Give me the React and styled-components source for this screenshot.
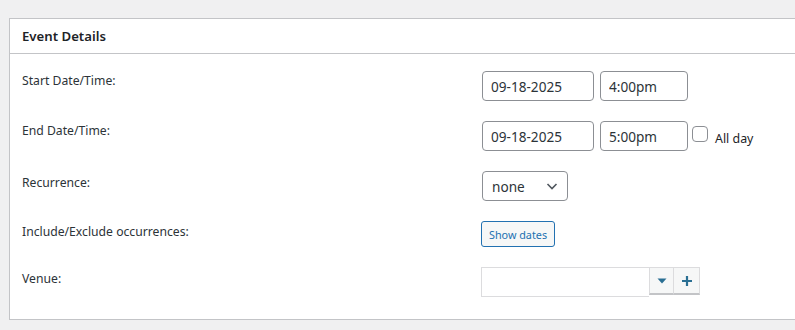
import styled, { createGlobalStyle } from "styled-components";

const GlobalStyle = createGlobalStyle`
  html, body {
    margin: 0;
    padding: 0;
    background: #f0f0f1;
    overflow: hidden;
  }
  body {
    font-family: "Segoe UI", "Noto Sans", "Open Sans", sans-serif;
    color: #1d2327;
    font-size: 13px;
  }
`;

const Page = styled.div`
  padding: 18px 0 0 9px;
`;

const Panel = styled.section`
  background: #fff;
  border: 1px solid #c3c4c7;
  border-right: none;
  height: 300px;
`;

const PanelHeader = styled.h2`
  margin: 0;
  height: 34px;
  padding: 0 12px;
  display: flex;
  align-items: center;
  font-size: 13.2px;
  font-weight: 600;
  color: #1d2327;
  border-bottom: 1px solid #c3c4c7;
`;

const Body = styled.div`
  display: grid;
  grid-template-columns: 460px 1fr;
  row-gap: 20px;
  padding: 17px 12px 22px;
  align-items: start;
`;

const Label = styled.div`
  font-size: 12.2px;
  line-height: 18px;
  padding-top: ${(p) => p.$offset || 1}px;
  color: #2c3338;
`;

const Field = styled.div`
  display: flex;
  align-items: center;
  gap: 6px;
  margin-left: ${(p) => (p.$flush ? -1 : 0)}px;
`;

const TextInput = styled.input`
  box-sizing: border-box;
  width: ${(p) => p.$width}px;
  height: 30px;
  padding: 0 8px;
  border: 1px solid #8c8f94;
  border-radius: 4px;
  font: inherit;
  font-size: 13.6px;
  color: #2c3338;
  background: #fff;
  outline: none;
`;

const SelectBox = styled.div`
  box-sizing: border-box;
  width: 86px;
  height: 30px;
  padding: 0 8px 0 9px;
  border: 1px solid #8c8f94;
  border-radius: 4px;
  display: flex;
  align-items: center;
  justify-content: space-between;
  font-size: 13.6px;
  color: #2c3338;
`;

const Check = styled.span`
  box-sizing: border-box;
  width: 16px;
  height: 16px;
  border: 1px solid #8c8f94;
  border-radius: 4px;
  margin: -5px 0 0 -2px;
`;

const CheckLabel = styled.span`
  font-size: 12.4px;
  color: #1d2327;
  margin: 4px 0 0 1px;
`;

const SmallButton = styled.button`
  box-sizing: border-box;
  height: 26px;
  padding: 0 7px;
  border: 1px solid #2271b1;
  border-radius: 3px;
  background: #f6f7f7;
  color: #2271b1;
  font: inherit;
  font-size: 10.8px;
  cursor: pointer;
`;

const Combo = styled.div`
  display: flex;
  align-items: flex-start;
`;

const ComboInput = styled.div`
  box-sizing: border-box;
  width: 168px;
  height: 30px;
  border: 1px solid #dcdcde;
  border-right: none;
  background: #fff;
`;

const ComboButton = styled.span`
  box-sizing: border-box;
  width: ${(p) => p.$width}px;
  height: 28px;
  display: flex;
  align-items: center;
  justify-content: center;
  background: #f6f7f7;
  border: 1px solid #dcdcde;
  border-bottom: 2px solid #c3c4c7;
  border-left: ${(p) => (p.$joined ? "none" : "1px solid #dcdcde")};
  color: #2a6f93;
`;

const Chevron = () => (
  <svg width="14" height="14" viewBox="0 0 14 14">
    <path d="M2.5 5 L7 9.5 L11.5 5" fill="none" stroke="#50575e" strokeWidth="1.6" />
  </svg>
);

const Caret = () => (
  <svg width="10" height="6" viewBox="0 0 10 6">
    <path d="M0.5 0.5 H9.5 L5 5.5 Z" fill="#2a6f93" />
  </svg>
);

const Plus = () => (
  <svg width="10" height="10" viewBox="0 0 10 10">
    <path d="M5 0 V10 M0 5 H10" stroke="#2a6f93" strokeWidth="2.2" />
  </svg>
);

export default function App() {
  return (
    <>
      <GlobalStyle />
      <Page>
        <Panel>
          <PanelHeader>Event Details</PanelHeader>
          <Body>
            <Label>Start Date/Time:</Label>
            <Field>
              <TextInput $width={112} defaultValue="09-18-2025" />
              <TextInput $width={88} defaultValue="4:00pm" />
            </Field>

            <Label>End Date/Time:</Label>
            <Field>
              <TextInput $width={112} defaultValue="09-18-2025" />
              <TextInput $width={88} defaultValue="5:00pm" />
              <Check />
              <CheckLabel>All day</CheckLabel>
            </Field>

            <Label $offset={3}>Recurrence:</Label>
            <Field>
              <SelectBox>
                none
                <Chevron />
              </SelectBox>
            </Field>

            <Label $offset={2}>Include/Exclude occurrences:</Label>
            <Field $flush>
              <SmallButton>Show dates</SmallButton>
            </Field>

            <Label $offset={3}>Venue:</Label>
            <Field $flush>
              <Combo>
                <ComboInput />
                <ComboButton $width={25}>
                  <Caret />
                </ComboButton>
                <ComboButton $width={26} $joined>
                  <Plus />
                </ComboButton>
              </Combo>
            </Field>
          </Body>
        </Panel>
      </Page>
    </>
  );
}
